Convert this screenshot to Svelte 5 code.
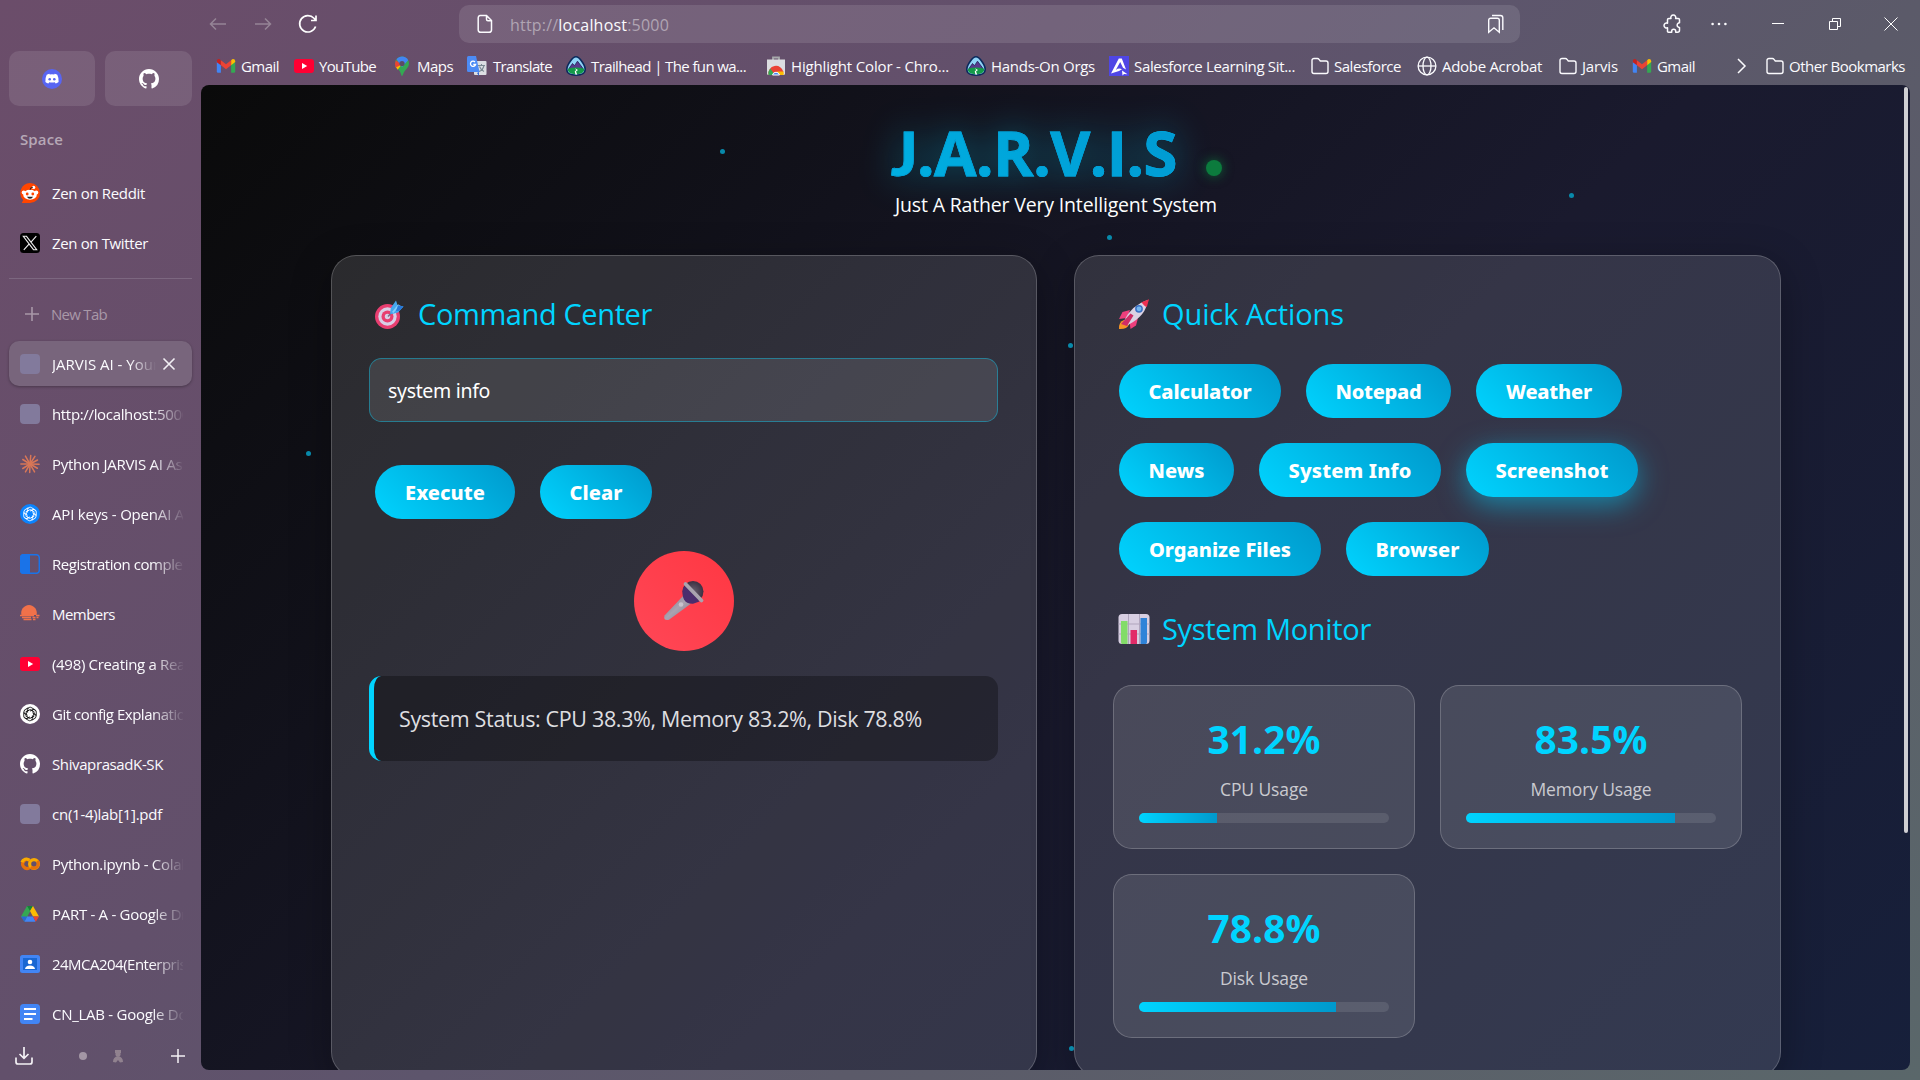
<script>
  // Tracks a label so that it fills the given width in pixels.
  function fit(node, width) {
    const natural = node.getBoundingClientRect().width;
    node.style.letterSpacing = (width - natural) / node.textContent.length + 'px';
  }

  const bookmarks = [
    { icon: 'gmail', text: 'Gmail', pitch: 78, tx: 24, w: 38 },
    { icon: 'youtube', text: 'YouTube', pitch: 98, tx: 24, w: 57 },
    { icon: 'maps', text: 'Maps', pitch: 75, tx: 24, w: 36 },
    { icon: 'translate', text: 'Translate', pitch: 99, tx: 25, w: 59 },
    { icon: 'trailhead', text: 'Trailhead | The fun wa...', pitch: 200, tx: 24, w: 155 },
    { icon: 'store', text: 'Highlight Color - Chro...', pitch: 200, tx: 24, w: 158 },
    { icon: 'trailhead', text: 'Hands-On Orgs', pitch: 143, tx: 24, w: 104 },
    { icon: 'astro', text: 'Salesforce Learning Sit...', pitch: 201, tx: 24, w: 161 },
    { icon: 'folder', text: 'Salesforce', pitch: 107, tx: 23, w: 67 },
    { icon: 'globe', text: 'Adobe Acrobat', pitch: 141, tx: 24, w: 100 },
    { icon: 'folder', text: 'Jarvis', pitch: 74, tx: 23, w: 36 },
    { icon: 'gmail', text: 'Gmail', pitch: 103, tx: 24, w: 38 },
    { icon: 'chevron', text: '', pitch: 30, tx: 20, w: 0 },
    { icon: 'folder', text: 'Other Bookmarks', pitch: 144, tx: 23, w: 116 }
  ];

  const essentials = [
    { icon: 'reddit', text: 'Zen on Reddit', w: 93 },
    { icon: 'x', text: 'Zen on Twitter', w: 96 }
  ];

  const tabs = [
    { icon: 'blank', text: 'JARVIS AI - Your', w: 107, active: true },
    { icon: 'blank', text: 'http://localhost:5000', w: 138 },
    { icon: 'claude', text: 'Python JARVIS AI Assistant', w: 175 },
    { icon: 'openaiBlue', text: 'API keys - OpenAI API', w: 145 },
    { icon: 'panel', text: 'Registration completed', w: 152 },
    { icon: 'sun', text: 'Members', w: 63 },
    { icon: 'youtube', text: '(498) Creating a React', w: 145 },
    { icon: 'openai', text: 'Git config Explanation', w: 142 },
    { icon: 'github', text: 'ShivaprasadK-SK', w: 111 },
    { icon: 'blank', text: 'cn(1-4)lab[1].pdf', w: 110 },
    { icon: 'colab', text: 'Python.ipynb - Colab', w: 138 },
    { icon: 'drive', text: 'PART - A - Google Drive', w: 154 },
    { icon: 'contact', text: '24MCA204(Enterprise', w: 142 },
    { icon: 'docs', text: 'CN_LAB - Google Docs', w: 149 }
  ];

  const actions = [
    [{ t: 'Calculator', w: 162, tw: 103 }, { t: 'Notepad', w: 145, tw: 86 }, { t: 'Weather', w: 146, tw: 86 }],
    [{ t: 'News', w: 115, tw: 56 }, { t: 'System Info', w: 182, tw: 123 }, { t: 'Screenshot', w: 172, tw: 113, hot: true }],
    [{ t: 'Organize Files', w: 202, tw: 142 }, { t: 'Browser', w: 143, tw: 84 }]
  ];

  const metrics = [
    { value: '31.2%', label: 'CPU Usage', pct: 31.2, lw: 88 },
    { value: '83.5%', label: 'Memory Usage', pct: 83.5, lw: 121 },
    { value: '78.8%', label: 'Disk Usage', pct: 78.8, lw: 88 }
  ];

  const particles = [
    [722, 151], [1571, 195], [1109, 237], [1070, 345], [308, 453], [1071, 1048]
  ];
</script>

{#snippet knot(color)}
  <g fill="none" stroke={color} stroke-width="0.9">
    {#each [0, 60, 120, 180, 240, 300] as a}
      <path d="M7.600 8.600V5.700a2.600 2.600 0 0 1 4.300-1.800L14.600 5.500M7.600 7l2.600-1.500 2.600 1.500" transform="rotate({a} 10 10)" />
    {/each}
  </g>
{/snippet}

{#snippet icon(name)}
  <svg class="icon" viewBox="0 0 20 20" width="20" height="20">
    {#if name === 'gmail'}
      <path d="M0.800 5v10.600q0 1.200 1.200 1.200h2.900V8.400z" fill="#4285f4" />
      <path d="M19.200 5v10.600q0 1.200-1.200 1.200h-2.900V8.400z" fill="#34a853" />
      <path d="M15.100 4.300v4.900l4.100-3.100V5q-.1-2-2.100-2-.8 0-2 1.300z" fill="#fbbc04" />
      <path d="M.8 5v1.300l4.100 3V4.400Q3.700 3 2.800 3 .9 3.100.8 5z" fill="#c5221f" />
      <path d="M4.900 4.300L10 8.200l5.100-3.900v5L10 13.200 4.900 9.300z" fill="#ea4335" />
    {:else if name === 'youtube'}
      <rect y="3" width="20" height="14" rx="3" fill="#ff0033" />
      <path d="M8 7l5.200 3L8 13z" fill="#fff" />
    {:else if name === 'maps'}
      <path d="M10 0.500a7 7 0 0 1 7 7c0 4.500-4.600 6-6.500 12.300h-1C8.500 13.500 3 12 3 7.500a7 7 0 0 1 7-7z" fill="#34a853" />
      <path d="M3.500 10.500L12 5.500l-6.300 8.300z" fill="#fbbc04" />
      <path d="M3.800 4.300L10 8.500l-6.300 2.900Q2.200 7.500 3.800 4.300z" fill="#ea4335" />
      <path d="M4.500 3.200C7.500-.6 14-.5 16.200 4.200L10 11z" fill="#4285f4" />
      <circle cx="10" cy="7.500" r="2.600" fill="#5b4b66" />
    {:else if name === 'translate'}
      <rect x="7" y="5" width="12.500" height="14" rx="1" fill="#dcdfe3" />
      <path d="M10 17l2 3v-4z" fill="#3367d6" />
      <path d="M11 9.500h7M14.500 8v1.500M17 9.500c-1 4-3 5.500-5 6M12.500 10.500c1 2.500 2.500 4 4.500 5" stroke="#7b8a93" stroke-width="1.100" fill="none" />
      <path d="M1.500 0H9l3.500 16H1.500Q0 16 0 14.500v-13Q0 0 1.500 0z" fill="#4c8bf5" />
      <path d="M8 6a2.600 2.600 0 1 0 .6 2.500H6.300" fill="none" stroke="#fff" stroke-width="1.300" />
    {:else if name === 'trailhead'}
      <path d="M10 .8C13.500 .8 19.200 9 19.200 13.500c0 4-4 5.700-9.200 5.700S.8 17.500.8 13.500C.8 9 6.500.8 10 .8z" fill="#8fd3f7" stroke="#0b2a5c" stroke-width="1.600" />
      <path d="M3 12.500l3.500-5 2 2.200 3-4.500 5.500 7.300z" fill="#5a3a8e" stroke="#1d2559" stroke-width=".8" />
      <path d="M1.800 12.800q8-2.500 16.400 0 .6 5.300-8.200 5.500-8.800-.2-8.200-5.500z" fill="#149a49" />
      <path d="M9 12.200l3 1.700-2 1.500 1.200 3H9.500l-.8-2.800 1.500-1.500z" fill="#fff" />
    {:else if name === 'store'}
      <path d="M7 4V1.500h6V4" fill="none" stroke="#a7a9ac" stroke-width="1.800" />
      <path d="M1 3.500h18v14q0 1.500-1.500 1.500h-15Q1 19 1 17.500z" fill="#dcdde0" />
      <path d="M2.500 19a7.500 7.500 0 0 1 15-3l-5 0z" fill="#ea4335" />
      <path d="M2.500 19a8 8 0 0 1 1.700-6.500L9 19z" fill="#34a853" />
      <path d="M17.500 19q.5-1.500 0-3.500H11L13 19z" fill="#fbbc04" />
      <path d="M6.500 19a3.600 3.600 0 0 1 7 0z" fill="#4285f4" stroke="#fff" />
    {:else if name === 'astro'}
      <rect width="20" height="20" fill="#4f46e5" />
      <path d="M2 17.500L9.800 2.500l3 0 4.200 11-3-1.700L11.200 6 6.800 14q3-2.500 6.200-.7l-3 1.800z" fill="#fff" />
      <path d="M13 14.500l5.500 3.800-3.500-.3-1.500 1.500z" fill="#fff" />
    {:else if name === 'folder'}
      <path d="M2 15.500v-11A2 2 0 0 1 4 2.500h3.400q1 0 1.600.8l1.300 1.700H16a2 2 0 0 1 2 2v8.500a2 2 0 0 1-2 2H4a2 2 0 0 1-2-2z" fill="none" stroke="#fbfbfe" stroke-width="1.400" />
    {:else if name === 'globe'}
      <g fill="none" stroke="#fbfbfe" stroke-width="1.300"><circle cx="10" cy="10" r="8.900" /><ellipse cx="10" cy="10" rx="4" ry="8.900" /><path d="M1 10h18" /></g>
    {:else if name === 'chevron'}
      <path d="M3 3l7 7-7 7" fill="none" stroke="#fbfbfe" stroke-width="1.500" />
    {:else if name === 'reddit'}
      <path d="M10 0a10 10 0 1 1 0 20H1.800l1.400-3A10 10 0 0 1 10 0z" fill="#ff4500" />
      <ellipse cx="10" cy="11.700" rx="6.800" ry="5" fill="#fff" /><circle cx="3.700" cy="9.500" r="2" fill="#fff" /><circle cx="16.300" cy="9.500" r="2" fill="#fff" /><circle cx="13.600" cy="4.400" r="1.700" fill="#fff" />
      <path d="M10 7q0-3 3-2.800" fill="none" stroke="#222" stroke-width=".9" />
      <circle cx="7.200" cy="11" r="1.400" fill="#ff4500" /><circle cx="12.800" cy="11" r="1.400" fill="#ff4500" />
      <path d="M7 13.800h6q-.8 2-3 2t-3-2z" fill="#222" />
    {:else if name === 'x'}
      <rect width="20" height="20" rx="3.500" fill="#000" />
      <path d="M3.300 3.300h3.200l10.200 13.400h-3.200zM16.300 3.200L11 9.200M9 11.200L3.800 16.900" fill="none" stroke="#eee" stroke-width="1.100" />
    {:else if name === 'blank'}
      <rect width="20" height="20" rx="4" fill="#827a9c" />
    {:else if name === 'claude'}
      <g stroke="#d97757" stroke-width="1.500" stroke-linecap="round">
        {#each [5, 33, 62, 92, 120, 150, 182, 210, 238, 270, 302, 330] as a, i}
          <path d="M10 10V{i % 2 ? 0.9 : 1.5}" transform="rotate({a} 10 10)" />
        {/each}
      </g>
    {:else if name === 'openaiBlue'}
      <circle cx="10" cy="10" r="10" fill="#0a84ff" />{@render knot('#fff')}
    {:else if name === 'openai'}
      <circle cx="10" cy="10" r="10" fill="#fff" />{@render knot('#111')}
    {:else if name === 'panel'}
      <rect x="0.700" y="0.700" width="18.600" height="18.600" rx="3" fill="none" stroke="#1a73e8" stroke-width="1.500" />
      <path d="M3.500 0H10v20H3.500Q0 20 0 16.500v-13Q0 0 3.500 0z" fill="#1a73e8" />
    {:else if name === 'sun'}
      <path d="M1.500 11a7.800 7.800 0 1 1 15 0z" fill="#f0714a" />
      <path d="M0 11.500h14m2 0h3.500M2 13.500h9m1.500 0h3m1 0h2M3.500 15.500h8m1.500 0h2.500" stroke="#f0714a" stroke-width="1.400" />
    {:else if name === 'github'}
      <path transform="scale(1.25)" fill="#fff" d="M8 0C3.580 0 0 3.580 0 8c0 3.540 2.290 6.530 5.470 7.590.4.070.55-.17.55-.38 0-.19-.01-.82-.01-1.490-2.010.37-2.530-.49-2.690-.94-.09-.23-.48-.94-.82-1.130-.28-.15-.68-.52-.01-.53.63-.01 1.080.58 1.230.82.72 1.210 1.870.87 2.330.66.07-.52.28-.87.51-1.070-1.780-.2-3.640-.89-3.640-3.950 0-.87.31-1.590.82-2.150-.08-.2-.36-1.020.08-2.120 0 0 .67-.21 2.200.82.64-.18 1.320-.27 2-.27s1.360.09 2 .27c1.530-1.040 2.200-.82 2.200-.82.44 1.100.16 1.920.08 2.120.51.56.82 1.270.82 2.150 0 3.070-1.870 3.750-3.650 3.950.29.25.54.73.54 1.480 0 1.070-.01 1.930-.01 2.200 0 .21.15.46.55.38A8.010 8.010 0 0 0 16 8c0-4.420-3.580-8-8-8z" />
    {:else if name === 'discord'}
      <circle cx="10" cy="10" r="10" fill="#5865f2" />
      <path d="M7.800 5.500q2.200-.5 4.400 0l.5-.8q1.700.4 2.600 1.100 1.700 3.500 1.300 7.200-1.600 1.300-3 1.500l-.8-1.300q-2.800.8-5.600 0l-.8 1.300q-1.600-.3-3-1.500-.4-3.700 1.300-7.200 1.200-.8 2.600-1.100z" fill="#fff" />
      <circle cx="7.700" cy="10.300" r="1.300" fill="#5865f2" /><circle cx="12.300" cy="10.300" r="1.300" fill="#5865f2" />
    {:else if name === 'colab'}
      <g fill="none" stroke-width="3.200"><path d="M9.500 6.300A4.400 4.400 0 1 0 9.500 13.700" stroke="#e8710a" /><path d="M9.200 6.200A4.400 4.400 0 0 0 2 8.200" stroke="#f9ab00" /><circle cx="14" cy="10" r="4.400" stroke="#f9ab00" /><path d="M17.300 7a4.400 4.400 0 0 1-6.400 6" stroke="#e8710a" /></g>
    {:else if name === 'drive'}
      <path d="M7 2h6L4.500 17.800 1 12.500z" fill="#34a853" /><path d="M7 2h6l-3 5z" fill="#188038" />
      <path d="M13 2l6 10.500h-6L10 7z" fill="#fbbc04" /><path d="M7 12.500h6l2.500 5.300h-11z" fill="#4285f4" />
      <path d="M13 12.500h6l-3.200 5.300z" fill="#ea4335" /><path d="M1 12.500h6l-2.700 5.300z" fill="#2a66d9" />
    {:else if name === 'contact'}
      <rect y="1" width="20" height="18" rx="2.500" fill="#4285f4" /><rect x="3" y="4" width="14" height="12" fill="#1967d2" />
      <circle cx="10" cy="8" r="2.300" fill="#fff" /><path d="M5 15q.5-3.500 5-3.500t5 3.500z" fill="#fff" />
    {:else if name === 'docs'}
      <rect width="20" height="20" rx="3.500" fill="#4285f4" /><path d="M4 5h12M4 10h12M4 15h8.500" stroke="#fff" stroke-width="2.200" />
    {/if}
  </svg>
{/snippet}

<div class="browser">
  <aside>
    <div class="pins">
      <div class="pin">{@render icon('discord')}</div>
      <div class="pin wide">{@render icon('github')}</div>
    </div>
    <div class="space"><span use:fit={43}>Space</span></div>
    {#each essentials as e}
      <div class="tab">{@render icon(e.icon)}<span class="name"><span use:fit={e.w}>{e.text}</span></span></div>
    {/each}
    <hr />
    <div class="tab new">
      <svg class="icon" viewBox="0 0 20 20" width="20" height="20"><path d="M10 3v14M3 10h14" stroke="#a898a8" stroke-width="1.600" /></svg>
      <span class="name"><span use:fit={56}>New Tab</span></span>
    </div>
    {#each tabs as t}
      <div class="tab" class:active={t.active}>
        {@render icon(t.icon)}
        <span class="name" class:fade={t.w > 130 || t.active}><span use:fit={t.w}>{t.text}</span></span>
        {#if t.active}
          <svg class="close" viewBox="0 0 14 14" width="14" height="14"><path d="M1.500 1.500l11 11M12.500 1.500l-11 11" stroke="#f2eff4" stroke-width="1.600" /></svg>
        {/if}
      </div>
    {/each}
    <footer>
      <svg width="18" height="18" viewBox="0 0 18 18" fill="none" stroke="#f4f1f5" stroke-width="1.700"><path d="M9 0v11M4.500 7L9 11.300 13.500 7M1 10.500V15q0 2 2 2h12q2 0 2-2v-4.500" /></svg>
      <i></i>
      <svg width="12" height="14" viewBox="0 0 12 14" fill="#91828f"><path d="M3 1h6v3H3z" /><circle cx="6" cy="5" r="2.600" /><path d="M1 13q0-5 5-6 5 1 5 6l-3 .5L6 11l-2 2.500z" /></svg>
      <svg width="16" height="16" viewBox="0 0 16 16" stroke="#f4f1f5" stroke-width="1.500"><path d="M8 1v14M1 8h14" /></svg>
    </footer>
  </aside>

  <div class="main">
    <div class="toolbar">
      <div class="nav">
        <svg width="18" height="14" viewBox="0 0 18 14" fill="none" stroke="#958496" stroke-width="1.500"><path d="M7 1.500L1.500 7 7 12.500M1.500 7h15.500" /></svg>
        <svg width="18" height="14" viewBox="0 0 18 14" fill="none" stroke="#958496" stroke-width="1.500"><path d="M11 1.500L16.500 7 11 12.500M16.500 7H1" /></svg>
        <svg width="20" height="20" viewBox="0 0 20 20" fill="none" stroke="#fff" stroke-width="1.700"><path d="M17.600 12.500a8.200 8.200 0 1 1-1.600-8.200l1.300 1.500M18 1.500v5h-5" /></svg>
      </div>
      <div class="url">
        <svg width="16" height="20" viewBox="0 0 16 20" fill="none" stroke="#fbfbfe" stroke-width="1.500"><path d="M3 1.500h6.500l5 5V16a2.300 2.300 0 0 1-2.300 2.300H3.500A2.300 2.300 0 0 1 1.200 16V3.800A2.300 2.300 0 0 1 3 1.500zM9.500 1.500v3.700q0 1.500 1.500 1.500h3.500" /></svg>
        <span class="address" use:fit={159}>http://<b>localhost</b>:5000</span>
        <svg width="18" height="20" viewBox="0 0 18 20" fill="none" stroke="#fbfbfe" stroke-width="1.400"><path d="M1.700 6.200a2 2 0 0 1 2-2h6.600a2 2 0 0 1 2 2v12L7 13.800l-5.300 4.400zM5 1.500h8.500a2.300 2.300 0 0 1 2.300 2.300V16" /></svg>
      </div>
      <div class="controls">
        <svg width="20" height="20" viewBox="0 0 20 20" fill="none" stroke="#fbfbfe" stroke-width="1.500" stroke-linejoin="round"><path d="M4.500 17.500v-3.700a2.500 2.500 0 1 1 0-4.600V5.800Q4.500 4.500 5.800 4.500H8a2.500 2.500 0 1 1 4.600 0h2.600q1.300 0 1.300 1.300v3a1.900 1.900 0 1 0 0 4.700v2.700q0 2-2 2h-1.800v-1a2 2 0 0 0-4 0v1H5.500q-1 0-1-.7z" /></svg>
        <svg width="16" height="4" viewBox="0 0 16 4" fill="#fbfbfe"><circle cx="1.600" cy="2" r="1.300" /><circle cx="8" cy="2" r="1.300" /><circle cx="14.400" cy="2" r="1.300" /></svg>
        <svg width="12" height="12" viewBox="0 0 12 12" stroke="#fff"><path d="M0 5.500h12" /></svg>
        <svg width="12" height="12" viewBox="0 0 12 12" fill="none" stroke="#fff"><path d="M.5 3.500h8v8h-8zM3.500 3.500v-3h8v8h-3" /></svg>
        <svg width="14" height="14" viewBox="0 0 14 14" stroke="#fff"><path d="M.5.500l13 13M13.500.500l-13 13" /></svg>
      </div>
    </div>

    <div class="bookmarks">
      {#each bookmarks as b}
        <div class="bookmark" style="width:{b.pitch}px">
          <span class="slot" style="width:{b.tx}px">{@render icon(b.icon)}</span>
          {#if b.text}<span use:fit={b.w}>{b.text}</span>{/if}
        </div>
      {/each}
    </div>

    <div class="page">
      {#each particles as [x, y]}
        <div class="particle" style="left:{x - 203.5}px;top:{y - 87.5}px"></div>
      {/each}
      <div class="scroll"></div>

      <header>
        <div class="brand"><h1 use:fit={286}><span class="initial">J</span>.A.R.V.I.S</h1><div class="online"></div></div>
        <p><span use:fit={322}>Just A Rather Very Intelligent System</span></p>
      </header>

      <div class="cards">
        <section>
          <h2>
            <svg width="32" height="32" viewBox="0 0 32 32">
              <circle cx="13.500" cy="18.500" r="12.500" fill="#e83e70" /><circle cx="13.500" cy="18.500" r="9.200" fill="#d9cfe6" /><circle cx="13.500" cy="18.500" r="6" fill="#e83e70" /><circle cx="13.500" cy="18.500" r="2.700" fill="#d9cfe6" />
              <path d="M14 18.500L25 7" stroke="#7d6d8d" stroke-width="1.600" /><path d="M16 15.500l.8-5.500L22 2.500l1.500 4.500 6 1.500-5.500 6-6 1.500z" fill="#45a7ee" /><path d="M18 14l6-7.500 2 .8-6.500 7.700z" fill="#81cdfb" /><path d="M24 7.200l5.500 1.300-4 4.300-3.500.3z" fill="#2878d8" />
            </svg>
            <span use:fit={234}>Command Center</span>
          </h2>
          <div class="input"><span use:fit={102}>system info</span></div>
          <div class="row commands">
            <button style="width:140px"><span use:fit={80}>Execute</span></button>
            <button style="width:112px"><span use:fit={53}>Clear</span></button>
          </div>
          <div class="mic">
            <svg width="42" height="42" viewBox="0 0 42 42">
              <defs>
                <linearGradient id="body" x1="0" y1="0" x2="1" y2="1"><stop offset="0" stop-color="#77717f" /><stop offset=".5" stop-color="#aaa3b1" /><stop offset="1" stop-color="#817a89" /></linearGradient>
                <radialGradient id="head"><stop offset="0" stop-color="#6a6170" /><stop offset="1" stop-color="#3b3042" /></radialGradient>
              </defs>
              <path d="M20 16L1.500 35.500q-1.500 5.500 4.500 4.300L27.500 24z" fill="url(#body)" />
              <circle cx="30" cy="11.500" r="10.500" fill="url(#head)" />
              <path d="M20 8Q18.500 15 21 19.500t9 4.300l6.500-2.300L23 5z" fill="#4b2d6d" />
              <path d="M22.500 4L38.500 20.500" stroke="#aaa4af" stroke-width="3.800" stroke-linecap="round" />
              <circle cx="18" cy="24.500" r="2.300" fill="#c8c3cd" />
            </svg>
          </div>
          <div class="response"><span use:fit={523}>System Status: CPU 38.3%, Memory 83.2%, Disk 78.8%</span></div>
        </section>

        <section>
          <h2>
            <svg width="32" height="32" viewBox="0 0 32 32">
              <path d="M1 31q-.5-7 5-9l5 4.500Q9 31.500 1 31z" fill="#f59426" />
              <path d="M12 12L4.500 14 1 21l8-1zM20 20l-2 7.500L12.500 31l-1-8z" fill="#ee3f7c" />
              <path d="M6 23Q13 7.500 29.500 2 29 17 10 27z" fill="#dcd2e4" />
              <path d="M23.500 4.300L31 1.300 28.800 9q-2.500-.5-5.300-4.700z" fill="#ee2f50" />
              <circle cx="21" cy="10.800" r="3.900" fill="#3c72c4" /><circle cx="21" cy="10.800" r="2.400" fill="#74b7ef" />
              <path d="M3 26l9.500-10.500 3 2L9 28z" fill="#cf2c66" />
            </svg>
            <span use:fit={182}>Quick Actions</span>
          </h2>
          <div class="actions">
            {#each actions as row}
              <div class="row">
                {#each row as a}
                  <button class:hot={a.hot} style="width:{a.w}px"><span use:fit={a.tw}>{a.t}</span></button>
                {/each}
              </div>
            {/each}
          </div>
          <h2 class="second">
            <svg width="32" height="32" viewBox="0 0 32 32">
              <rect x="0.500" y="1" width="31" height="30" rx="3.500" fill="#d8cfe2" /><path d="M10.500 1v30M21.500 1v30M.5 11h31M.5 21h31" stroke="#b0a5bd" />
              <path d="M3 8h6.500v23H4q-1-.5-1-2z" fill="#82dc68" /><path d="M12.500 17H19v14h-6.500z" fill="#e22b68" /><path d="M22.500 5H29v24q0 1.500-1 2h-5.500z" fill="#2f83d8" />
            </svg>
            <span use:fit={209}>System Monitor</span>
          </h2>
          <div class="metrics">
            {#each metrics as m}
              <div class="metric">
                <div class="value"><span use:fit={113}>{m.value}</span></div>
                <div class="label"><span use:fit={m.lw}>{m.label}</span></div>
                <div class="bar"><div class="fill" style="width:{m.pct}%"></div></div>
              </div>
            {/each}
          </div>
        </section>
      </div>
    </div>
  </div>
</div>

<style>
  :global(body) { overflow: hidden; }
  * { box-sizing: border-box; }
  svg { display: block; flex: none; }
  .browser {
    display: flex;
    width: 1920px;
    height: 1080px;
    overflow: hidden;
    background: linear-gradient(135deg, #6b4d6a 0%, #62506b 36%, #5d556c 50%, #5b5a69 64%, #5a676a 100%);
    color: #fbfbfe;
    font: 15px/20px 'Open Sans', 'Noto Sans', sans-serif;
    white-space: nowrap;
  }

  aside { width: 201px; height: 1080px; padding: 51px 9px 0; flex: none; display: flex; flex-direction: column; }
  .pins { display: flex; gap: 10px; }
  .pin { width: 86px; height: 55px; border-radius: 10px; background: rgba(255, 255, 255, .1); display: grid; place-items: center; }
  .wide { width: 87px; }
  .space { height: 66px; padding: 0 11px; display: flex; align-items: center; color: #b6a8b6; font-weight: 600; }
  .tab { height: 45px; margin-bottom: 5px; padding: 0 9px 0 11px; display: flex; align-items: center; gap: 12px; border-radius: 10px; flex: none; }
  .space + .tab { margin-top: -2px; }
  hr { width: 183px; height: 1px; margin: 8px 0 12px; border: 0; background: #7c6780; flex: none; }
  .name { flex: 1; min-width: 0; overflow: hidden; height: 24px; line-height: 24px; }
  .name span, .space span { display: inline-block; }
  .fade { mask-image: linear-gradient(90deg, #000 100px, transparent 133px); }
  .new { color: #a898a8; }
  .new .icon { margin-left: 2px; margin-right: -3px; }
  .active { background: #78657c; box-shadow: 0 1px 3px rgba(0, 0, 0, .3); }
  .active .fade { mask-image: linear-gradient(90deg, #000 78px, transparent 104px); }
  .active .close { margin-left: -10px; margin-right: 7px; }
  footer { display: flex; align-items: center; height: 40px; padding: 0 6px 0 6px; margin-top: -5px; }
  footer i { width: 8px; height: 8px; border-radius: 50%; background: #a396a5; margin: 0 25px 0 46px; }
  footer svg:last-child { margin-left: auto; }

  .main { flex: 1; width: 1719px; display: flex; flex-direction: column; }
  .toolbar { display: flex; height: 48px; align-items: center; padding-left: 8px; flex: none; }
  .nav { display: flex; align-items: center; gap: 27px; width: 250px; }
  .nav svg:last-child { margin-left: -1px; }
  .url { width: 1061px; height: 38px; border-radius: 10px; background: rgba(255, 255, 255, .11); display: flex; align-items: center; padding: 0 15px 0 18px; }
  .address { margin-left: 17px; margin-right: auto; padding-top: 2px; font-size: 16px; color: #b0a5b3; }
  .address b { font-weight: 400; color: #fbfbfe; }
  .controls { display: flex; align-items: center; margin-left: 143px; }
  .controls svg:nth-child(2) { margin-left: 28px; }
  .controls svg:nth-child(3) { margin-left: 45px; }
  .controls svg:nth-child(4) { margin-left: 45px; }
  .controls svg:nth-child(5) { margin-left: 43px; }
  .bookmarks { display: flex; height: 37px; padding: 0 0 1px 16px; flex: none; }
  .bookmark { display: flex; align-items: center; flex: none; }
  .slot { flex: none; }
  .slot .icon { margin-left: -1px; }

  .page {
    position: relative;
    width: 1709px;
    height: 985px;
    border-radius: 8px;
    overflow: hidden;
    padding-top: 32px;
    background: linear-gradient(135deg, #0a0a0a 0%, #1a1a2e 50%, #16213e 100%) 0 0 / 100% 1295px;
  }
  .particle { position: absolute; width: 5px; height: 5px; border-radius: 50%; background: #0889aa; }
  .scroll { position: absolute; right: 2px; top: 2px; width: 4px; height: 746px; border-radius: 2px; background: #cfcfd3; }
  .brand { display: flex; align-items: center; height: 70px; padding-left: 690px; }
  h1 {
    margin: 0;
    font-size: 61.5px;
    line-height: 70px;
    font-weight: 700;
    background: linear-gradient(45deg, #00b0e2, #0099d2);
    background-clip: text;
    color: transparent;
    -webkit-text-stroke: .8px #00a3da;
    filter: drop-shadow(0 0 18px rgba(0, 190, 230, .45));
  }
  .initial { font-family: Lato, sans-serif; font-weight: 900; line-height: 60px; }
  .online { width: 16px; height: 16px; margin: 31px 0 0 29px; border-radius: 50%; background: #0c7b3d; box-shadow: 0 0 12px rgba(12, 140, 65, .7); }
  p { margin: 3px 0 35px; padding-left: 694px; font-size: 19.5px; line-height: 30px; color: #fff; }
  .cards { display: grid; grid-template-columns: 706px 707px; gap: 37px; padding-left: 130px; }
  section {
    height: 822px;
    padding: 38px 38px 38px 37px;
    border: 1px solid rgba(255, 255, 255, .2);
    border-radius: 25px;
    background: rgba(255, 255, 255, .12);
    box-shadow: 0 10px 40px rgba(0, 0, 0, .3);
  }
  section + section { padding-left: 38px; }
  h2 { display: flex; align-items: center; gap: 12px; height: 40px; margin: 0; padding-left: 5px; font-size: 29px; font-weight: 400; line-height: 40px; color: #00d4ff; }
  .second { padding-top: 2px; }
  .input { height: 64px; margin-top: 24px; padding-left: 18px; border: 1px solid rgba(0, 212, 255, .4); border-radius: 12.5px; background: rgba(255, 255, 255, .1); font: 19.5px/64px 'Noto Sans', sans-serif; color: #fff; }
  .row { display: flex; gap: 25px; padding-left: 6px; }
  .commands { margin-top: 43px; }
  button { height: 54px; padding: 1px 0 0; border: 0; border-radius: 27px; background: linear-gradient(45deg, #00d4ff, #0099cc); color: #fff; font: 800 20px/53px 'Noto Sans', sans-serif; }
  .hot { box-shadow: 0 8px 28px rgba(0, 212, 255, .5); }
  .mic { display: grid; place-items: center; width: 100px; height: 100px; margin: 32px auto 25px; border-radius: 50%; background: linear-gradient(45deg, #ff4757, #ff3742); }
  .response { height: 85px; padding-left: 25px; border-left: 5px solid #00d4ff; border-radius: 12.5px; background: rgba(0, 0, 0, .3); font-size: 21.5px; line-height: 86px; color: #dedee0; }
  .actions { display: flex; flex-direction: column; gap: 25px; margin: 30px 0 32px; }
  .metrics { display: grid; grid-template-columns: 302px 302px; gap: 25px; margin-top: 37px; }
  .metric { height: 164px; padding: 28px 25px 0; border: 1px solid rgba(255, 255, 255, .2); border-radius: 19px; background: rgba(255, 255, 255, .1); text-align: center; }
  .value { height: 50px; font-size: 38.8px; font-weight: 700; line-height: 50px; color: #00d4ff; }
  .label { margin: 12px 0 11px; font-size: 17.5px; line-height: 26px; color: #cacad0; }
  .bar { height: 10px; border-radius: 5px; overflow: hidden; background: rgba(255, 255, 255, .1); }
  .fill { height: 10px; background: linear-gradient(90deg, #00d4ff, #0099cc); }
</style>
